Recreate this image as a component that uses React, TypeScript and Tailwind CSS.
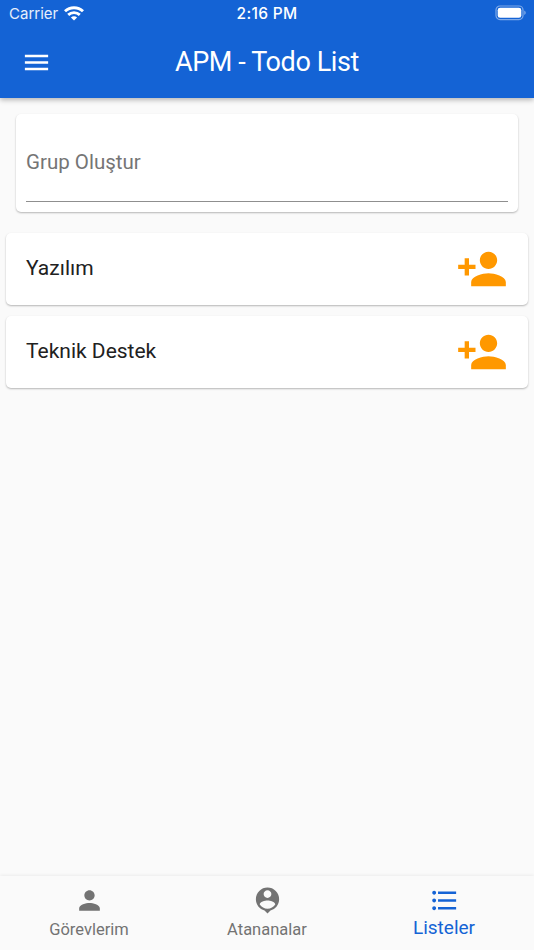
import React from "react";
import { MdFormatListBulleted, MdMenu, MdPerson, MdPersonAdd, MdPersonPin } from "react-icons/md";

const groups = ["Yazılım", "Teknik Destek"];

const StatusBar = () => {
    return (
        <div className="grid grid-cols-3 items-center h-[26px] pl-[9px] pr-[8px] font-['Inter',sans-serif]">
            <div className="flex items-center gap-[6px]">
                <span className="text-[15px] leading-[26px] pt-px text-white/90">Carrier</span>
                <svg className="-mt-px" width="20" height="15" viewBox="0 0 20 15" fill="none" stroke="white" strokeWidth="2.9">
                    <path d="M1 5.2C6 .5 14 .5 19 5.2" />
                    <path d="M4.2 8.9C7.5 5.9 12.5 5.9 15.8 8.9" />
                    <path d="M10 14.6 6.9 11.5C8.7 9.9 11.3 9.9 13.1 11.5Z" fill="white" stroke="none" />
                </svg>
            </div>
            <span className="text-center text-[15.5px] font-medium leading-[26px] pt-px pr-px tracking-[0.3px]">2:16 PM</span>
            <svg className="justify-self-end -mt-px" width="31" height="16" viewBox="0 0 31 16">
                <rect x="1" y="1" width="27" height="13.6" rx="4" fill="none" stroke="white" strokeOpacity=".45" strokeWidth="1.2" />
                <rect x="2.7" y="2.8" width="23.6" height="10" rx="2.4" fill="white" />
                <path d="M29.3 5.6c1.8.8 1.8 3.6 0 4.4z" fill="white" fillOpacity=".5" />
            </svg>
        </div>
    );
};

const Header = () => {
    return (
        <header className="relative h-[98px] bg-[#1463d5] text-white shadow-[0_2px_5px_rgba(0,0,0,0.28)]">
            <StatusBar />
            <div className="grid grid-cols-[1fr_auto_1fr] items-center h-[72px] px-[21px]">
                <MdMenu className="size-[31px]" />
                <h1 className="text-[27px] font-normal tracking-[-0.4px]">APM - Todo List</h1>
            </div>
        </header>
    );
};

const App = () => {
    return (
        <div className="flex flex-col h-[950px] w-[534px] overflow-hidden bg-[#fafafa] font-['Roboto',sans-serif]">
            <Header />

            <main className="flex-1">
                {/* New group field */}
                <div className="mx-[16px] mt-[16px] h-[98px] px-[10px] rounded-[5px] bg-white shadow-[0_1px_2px_rgba(0,0,0,0.28)]">
                    <div className="flex items-center h-[88px] border-b border-[#8f8f8f] pt-[10px] text-[20.5px] text-[#757575]">
                        <span>Grup Oluştur</span>
                    </div>
                </div>

                <ul className="mt-[21px] px-[6px] flex flex-col gap-[11px]">
                    {groups.map((name) => (
                        <li
                            key={name}
                            className="flex items-center justify-between h-[72px] pl-[20px] pr-[20px] rounded-[5px] bg-white shadow-[0_1px_2px_rgba(0,0,0,0.28)]"
                        >
                            <span className="text-[21px] text-[#212121]">{name}</span>
                            <MdPersonAdd className="size-[52px] text-[#ff9800]" />
                        </li>
                    ))}
                </ul>
            </main>

            <nav className="grid grid-cols-3 h-[74px] pt-[9px] text-[#737373] shadow-[0_-1px_3px_rgba(0,0,0,0.06)]">
                <a className="flex flex-col items-center">
                    <MdPerson className="size-[31px]" />
                    <span className="mt-[4px] text-[16.5px] leading-[20px]">Görevlerim</span>
                </a>
                <a className="flex flex-col items-center">
                    <MdPersonPin className="size-[31px]" />
                    <span className="mt-[4px] text-[16.5px] leading-[20px]">Atananalar</span>
                </a>
                <a className="flex flex-col items-center pr-[2px] text-[#1463d5]">
                    <MdFormatListBulleted className="size-[31px]" />
                    <span className="mt-px text-[19px] leading-[22px]">Listeler</span>
                </a>
            </nav>
        </div>
    );
};

export default App;
